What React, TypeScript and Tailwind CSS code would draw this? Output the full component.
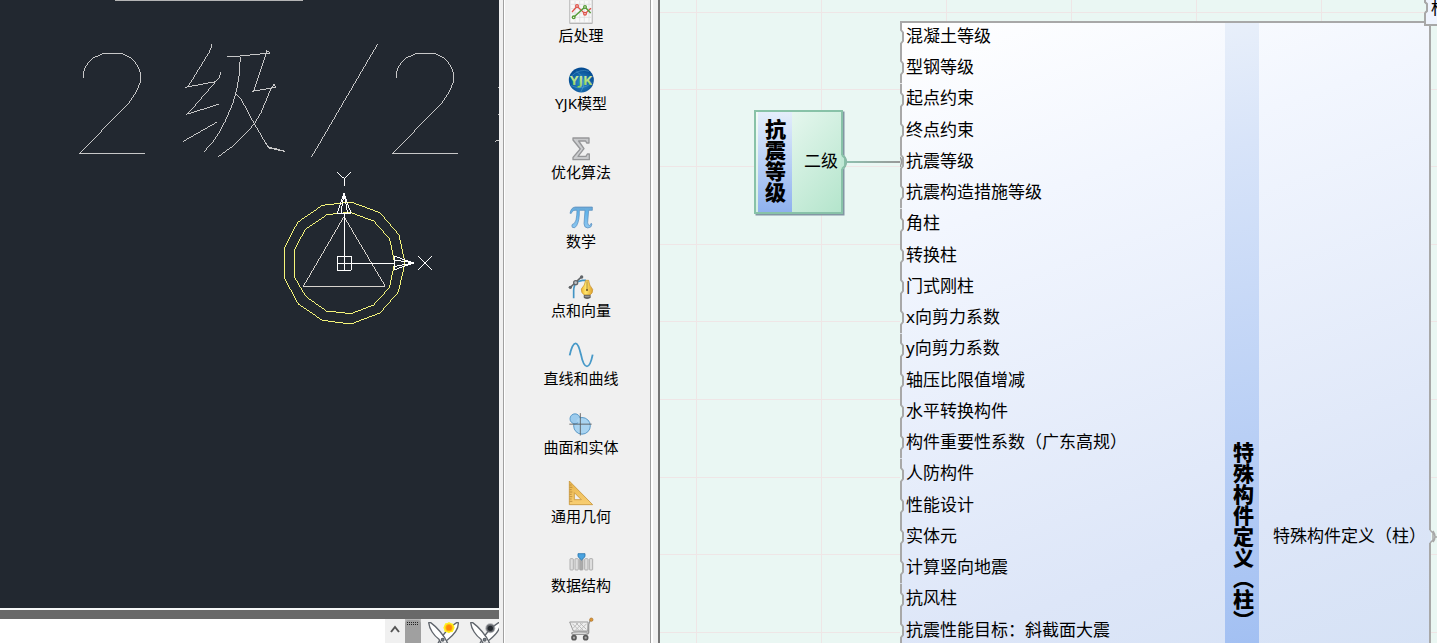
import React from "react";

const SANS = "font-['Noto_Sans','Noto_Sans_CJK_SC',sans-serif]";

const inputs = [
  "混凝土等级", "型钢等级", "起点约束", "终点约束", "抗震等级", "抗震构造措施等级", "角柱", "转换柱",
  "门式刚柱", "x向剪力系数", "y向剪力系数", "轴压比限值增减", "水平转换构件", "构件重要性系数（广东高规）",
  "人防构件", "性能设计", "实体元", "计算竖向地震", "抗风柱", "抗震性能目标：斜截面大震",
];

const TWO = "M70 143V128L76 112L84 99L100 84L130 70H185L213 84L232 105L241 128V158L225 192L205 222L58 370H254";

function CadDrawing() {
  return (
    <svg width="499" height="608" viewBox="0 0 499 608" fill="none" className="block">
      <path d="M115 0.5H303" stroke="#b5b5b5" />
      <g transform="translate(60 30) scale(.33333)" stroke="#c8c8c8" strokeWidth="3" shapeRendering="crispEdges">
        <path d={TWO} />
        <path d={TWO} transform="translate(939 0)" />
        <path d="M454 42V53L447 68L384 170M376 172L467 155M482 126L478 144L467 155L384 251M379 253L476 223M370 334L470 277" />
        <path d="M502 81L541 78L629 69L619 60V70L581 184M577 184L647 172L642 163L632 178L604 246L583 282L550 317L515 351L490 369L475 380" />
        <path d="M541 80L538 132L530 180L518 222L495 275L475 312L457 338L440 356L433 365M524 188L542 205L583 282L626 354L674 364L648 356L626 352L617 339M626 357H648" />
        <path d="M754 382L953 42M1314 172H1317M1314 253H1317M1305 334L1317 330" />
      </g>
      <g transform="translate(270 160) scale(.33333)" strokeWidth="3" shapeRendering="crispEdges">
        <path stroke="#f4f47a" d="M43 264L83 187L157 136L243 126L330 158L387 225L405 309L385 396L330 459L243 492L157 481L85 432L43 354ZM73 270L106 208L171 164L240 157L311 183L359 237L374 309L358 383L311 435L243 461L169 453L107 409L73 350Z" />
        <path stroke="#d8d4ce" d="M222 170L346 379H100Z" />
        <path stroke="#fff" d="M223 160V331M202 310H374M202 289H244V331H202ZM202 37L223 56L243 37M223 56V77M444 289L486 329M486 289L444 329" />
        <path stroke="#fff" d="M222 99L202 160H243ZM222 99L213 160M222 99L233 160M432 309L374 289V329ZM432 309L374 300M432 309L374 319" />
      </g>
    </svg>
  );
}

function Snip({ dark = false }: { dark?: boolean }) {
  return (
    <svg width="36" height="24" viewBox="170 87 108 72" fill="none" className="block shrink-0">
      <g stroke="#5f646b" strokeWidth="4" fill="#fff" strokeLinejoin="round">
        <path d="M264 98C265 116 252 134 231 150L216 160H203C214 136 238 110 259 98Z" />
        <path d="M175 98C177 117 191 137 206 148L212 160H232C222 136 198 110 181 98Z" />
        <circle cx="217" cy="149" r="4" fill="#7c858e" />
      </g>
      {dark ? (
        <g><circle cx="234" cy="115" r="15" fill="#85888d" opacity=".6" /><circle cx="234" cy="115" r="12" fill="#63666c" /><circle cx="234" cy="115" r="8" fill="#24282e" /></g>
      ) : (
        <g><path d="M236 96L241 99L248 101L251 108L253 113L250 120L247 126L240 127L236 130L230 127L223 125L221 118L219 113L222 106L225 100L231 99Z" fill="#fff01c" /><circle cx="236" cy="113" r="11" fill="#ffb210" /><circle cx="236" cy="113" r="8" fill="#ff8908" /></g>
      )}
    </svg>
  );
}

function Defs() {
  return (
    <svg width="0" height="0" className="absolute">
      <defs>
        <linearGradient id="blue" x1="0" y1="0" x2="0" y2="1"><stop stopColor="#6fa9d5" /><stop offset=".25" stopColor="#63b5eb" /><stop offset="1" stopColor="#8dc6ef" /></linearGradient>
        <linearGradient id="gold" x1="0" y1="0" x2="0" y2="1"><stop stopColor="#e9b54c" /><stop offset="1" stopColor="#f8ce72" /></linearGradient>
        <linearGradient id="nib" x1="0" y1="0" x2="1" y2="0"><stop stopColor="#f0b62e" /><stop offset=".4" stopColor="#ffe66d" /><stop offset="1" stopColor="#dda02c" /></linearGradient>
        <radialGradient id="globe" cx=".5" cy=".6" r=".55"><stop stopColor="#2f8fca" /><stop offset="1" stopColor="#044b92" /></radialGradient>
        <linearGradient id="yjk" x1="0" y1="0" x2="0" y2="1"><stop stopColor="#def4b2" /><stop offset="1" stopColor="#86cc4b" /></linearGradient>
      </defs>
    </svg>
  );
}

const tools: { label: string; box: string; art: React.ReactNode }[] = [
  {
    label: "后处理", box: "204 -4 78 78",
    art: <g fill="none">
      <rect x="208" y="-2" width="70" height="73" rx="3" fill="#aaa" /><rect x="209.500" y="-2" width="67" height="70" rx="2" fill="#f8f8f8" stroke="#c2c2c2" strokeWidth="3" />
      <path d="M213 12H273M213 25H273M213 38H273M213 51H273M225 2V64M239 2V64M253 2V64M267 2V64" stroke="#dadada" strokeWidth="2" />
      <g strokeWidth="4"><path d="M216 35L231 18L255 40L273 24" stroke="#df5148" /><path d="M221 51L255 20L272 38" stroke="#559b35" />
        <circle cx="231" cy="17" r="4" stroke="#df5148" fill="#fff" /><circle cx="255" cy="40" r="4" stroke="#df5148" fill="#fff" /><circle cx="221" cy="51" r="4" stroke="#559b35" fill="#fff" /><circle cx="255" cy="20" r="4" stroke="#559b35" fill="#fff" /></g>
    </g>,
  },
  {
    label: "YJK模型", box: "204 202 78 78",
    art: <g>
      <circle cx="244" cy="241" r="37.500" fill="url(#globe)" />
      <path d="M213 230Q240 205 267 215M213 258Q246 274 277 249M229 214Q267 241 242 278" fill="none" stroke="#69b5dc" strokeWidth="2" opacity=".6" />
      <text x="243" y="256" textAnchor="middle" fontSize="37" fontWeight="700" fill="url(#yjk)" textLength="68" lengthAdjust="spacingAndGlyphs" className="font-['Open_Sans',sans-serif]">YJK</text>
    </g>,
  },
  {
    label: "优化算法", box: "204 409 78 78",
    art: <g strokeLinejoin="round"><path d="M219 415H267V430H260L257 424H236L252 447L234 470H258L262 463H268V480H219V473L241 448L219 421Z" fill="#c8c9cb" stroke="#969799" strokeWidth="4" /><path d="M224 419L246 447L224 476" fill="none" stroke="#d0d1d3" strokeWidth="3" /></g>,
  },
  {
    label: "数学", box: "204 15 78 78",
    art: <path d="M210 40Q213 22 226 21H277V31H266L263 67Q263 76 269 76Q272 75 273 70L276 72Q275 84 263 84Q252 83 252 71L255 31H238Q239 61 230 77Q224 87 217 82Q214 78 217 73Q224 73 228 60Q231 45 231 31Q217 29 214 40Z" fill="url(#blue)" stroke="#5286b8" strokeWidth="2" />,
  },
  {
    label: "点和向量", box: "204 221 78 78",
    art: <g fill="none">
      <path d="M221 294V270Q222 250 232 244L247 240H258" stroke="#4294c4" strokeWidth="5" /><path d="M209 263L246 228" stroke="#62666a" strokeWidth="5" />
      <circle cx="227" cy="247" r="6" fill="#bfc3c7" stroke="#62666a" strokeWidth="4" /><circle cx="211" cy="261" r="5" fill="#606468" /><circle cx="245" cy="230" r="5" fill="#606468" />
      <path d="M257 240H266Q267 255 278 267Q279 279 270 284H253Q243 278 244 266Q255 255 257 240Z" fill="url(#nib)" stroke="#c58c28" strokeWidth="2" /><path d="M261 243V270" stroke="#92733a" strokeWidth="2" /><circle cx="261" cy="269" r="3" fill="#6e5125" /><path d="M252 285H271V292Q261 298 252 292Z" fill="#696969" stroke="#444" strokeWidth="1.500" /><path d="M254 288H269" stroke="#bbb" strokeWidth="2" />
    </g>,
  },
  {
    label: "直线和曲线", box: "204 427 78 78",
    art: <path d="M209 467Q217 431 227 431Q235 431 243 465Q250 500 261 500Q271 500 278 465" fill="none" stroke="#4799c8" strokeWidth="5.500" />,
  },
  {
    label: "曲面和实体", box: "204 33.5 78 78",
    art: <g fill="none"><circle cx="246" cy="78" r="25" fill="#a9d4f1" stroke="#5a9ac9" strokeWidth="3" /><circle cx="225" cy="57" r="15" fill="#9ccbed" stroke="#5a9ac9" strokeWidth="3" /><path d="M233 58L246 69" stroke="#a9d4f1" strokeWidth="14" /><path d="M208 73H275M241 40V107" stroke="#555" strokeWidth="2.500" /></g>,
  },
  {
    label: "通用几何", box: "204 240 78 78",
    art: <g><path d="M208 243L278 314H208ZM223 278V299H244Z" fill="url(#gold)" fillRule="evenodd" stroke="#c89539" strokeWidth="2.500" /><path d="M209 255H215M209 262H217M209 269H215M209 276H217M209 283H215M209 290H217M209 297H215M209 304H217" stroke="#a9772c" strokeWidth="2" /></g>,
  },
  {
    label: "数据结构", box: "204 446 78 78",
    art: <g fill="#dedede" stroke="#a3a3a3" strokeWidth="2.500">
      <rect x="210" y="475" width="10" height="34" rx="2" /><rect x="225" y="475" width="10" height="34" rx="2" /><rect x="239" y="473" width="10" height="36" rx="2" fill="#aaa" /><rect x="254" y="475" width="10" height="34" rx="2" /><rect x="268" y="475" width="10" height="34" rx="2" />
      <path d="M234 460H255V469L244.500 479L234 469Z" fill="#4aa3df" stroke="#2a76ae" />
    </g>,
  },
  {
    label: "", box: "204 652 78 78",
    art: <g fill="none"><path d="M209 667H264L263 694H220Z" fill="#eee" stroke="#9b9b9b" strokeWidth="3" /><path d="M217 672L237 692M228 670L250 692M240 670L259 689M234 670L219 686M248 670L226 692M260 672L240 692" stroke="#b5b5b5" strokeWidth="2.500" /><path d="M271 661L266 674V699Q265 704 256 704H219Q214 703 216 699Q217 696 263 697" stroke="#969696" strokeWidth="4" /><circle cx="274" cy="660" r="5" fill="#dd9735" stroke="#a56b24" strokeWidth="2" /><circle cx="222" cy="714" r="6" fill="#aaa" stroke="#5a5a5a" strokeWidth="5" /><circle cx="257" cy="714" r="6" fill="#aaa" stroke="#5a5a5a" strokeWidth="5" /></g>,
  },
];

function Viewer() {
  return (
    <section className="flex h-full w-[499px] shrink-0 flex-col overflow-hidden bg-[#222830]">
      <CadDrawing />
      <div className="h-[2px] shrink-0 bg-[#f6f8f8]" />
      <div className="h-[9px] shrink-0 bg-[#696969]" />
      <div className="flex h-6 shrink-0 bg-[#f0f0f0]">
        <div className="w-[385px] bg-white" />
        <div className="flex w-5 justify-center pt-[6px]">
          <svg width="10" height="8" viewBox="0 0 10 8"><path d="M1 7L5 2L9 7" fill="none" stroke="#555" strokeWidth="2" /></svg>
        </div>
        <div className="w-[16px] bg-[#a0a0a0]">
          <svg width="16" height="7" viewBox="0 0 16 7"><path d="M0 0H16V4Q15 1 13 1H3Q1 1 0 4Z" fill="#b9b9b9" /><path d="M2 3.500H14M2 5.500H14" stroke="#222" strokeDasharray="1 1" /></svg>
        </div>
        <div className="flex w-[78px] gap-[6px] overflow-hidden pl-[6px]"><Snip /><Snip dark /></div>
      </div>
    </section>
  );
}

function Toolbox() {
  return (
    <aside className="flex h-full w-[161px] shrink-0 overflow-hidden bg-[#f0f0f0]">
      <div className="ml-1 w-px bg-[#a0a0a0]" />
      <div className="w-px bg-white" />
      <div className="mt-[-1.3px] flex w-[145px] flex-col items-center pl-[7px]">
        {tools.map((t, i) => (
          <div key={i} className="flex h-[68.75px] w-full shrink-0 flex-col items-center">
            <svg width="26" height="26" viewBox={t.box} className="block shrink-0">{t.art}</svg>
            <span className="-mt-px whitespace-nowrap text-[15px] leading-[22px] text-black">{t.label}</span>
          </div>
        ))}
      </div>
      <div className="w-px bg-[#a0a0a0]" />
      <div className="w-[2px] bg-white" />
      <div className="w-[5px]" />
      <div className="w-[2px] bg-[#757575]" />
    </aside>
  );
}

function InputEdge({ wired = false }: { wired?: boolean }) {
  return (
    <svg width="6" height="31.25" viewBox="0 0 6 31.25" fill="none" className="block shrink-0">
      <path d="M0 9H1L3 11.500V20L1 22.500H0Z" fill="#eaf7f3" />
      <path d="M1 0V9L3 11.500V20L1 22.500V31.250" stroke="#a8a8a8" strokeWidth="2" />
      {wired && <path d="M0 11Q3 15 0 21" stroke="#999" strokeWidth="1.500" />}
    </svg>
  );
}

function Graph() {
  const columns = [36.5, 161.5, 286.5, 411.5, 536.5, 661.5];
  const rows = [12.5, 89.5, 166.5, 244.5, 321.5, 399.5, 477.5, 554.5, 632.5];
  return (
    <main className="relative h-full w-[777px] shrink-0 overflow-hidden bg-[#eaf7f3]">
      <svg width="777" height="643" className="absolute inset-0">
        <g stroke="#efe6e6">
          {columns.map((x) => <path key={x} d={`M${x} 0V643`} />)}
          {rows.map((y) => <path key={y} d={`M0 ${y}H777`} />)}
        </g>
      </svg>

      <div className="absolute left-[94px] top-[110px] flex h-[104px] w-[89px] border-2 border-[#88c2a8] bg-linear-to-br from-[#f2fbf7] to-[#b4e5cc] pl-[2px] shadow-[1.500px_1.500px_0_#8296a3]">
        <div className="flex w-[34px] items-center justify-center bg-linear-to-b from-[#e4eefb] to-[#8fb1ee] pb-[3px] pr-[2px]">
          <span className="whitespace-nowrap text-[21px] font-black leading-[21px] text-black [writing-mode:vertical-rl]">抗震等级</span>
        </div>
        <span className="flex flex-1 items-center justify-end pb-[2px] pr-[3px] text-[17px] text-black">二级</span>
      </div>

      <div className="absolute left-[240px] top-[21px] flex h-[1031px] w-[531px] border-r-2 border-t-2 border-[#a8a8a8] bg-[linear-gradient(160deg,#ffffff_0%,#f2f6fe_18%,#dde6f8_52%,#c6d9f0_100%)]">
        <ul className="-mt-[2px] w-[325px] shrink-0">
          {inputs.map((label) => (
            <li key={label} className="flex h-[31.25px] items-center">
              <InputEdge wired={label === "抗震等级"} />
              <span className="-mt-[1.5px] whitespace-nowrap text-[17px] leading-[24px] text-black">{label}</span>
            </li>
          ))}
        </ul>
        <div className="flex w-[34px] shrink-0 items-center justify-center bg-[linear-gradient(170deg,#e8effa_0%,#d8e4f9_12%,#a1bff2_62%,#83a8eb_100%)] pb-[3px]">
          <span className="whitespace-nowrap text-[21px] font-black leading-[21px] text-black [writing-mode:vertical-rl]">特殊构件定义（柱）</span>
        </div>
        <span className="flex flex-1 items-center whitespace-nowrap pb-[3px] pl-[14px] text-[17px] text-black">特殊构件定义（柱）</span>
      </div>

      <div className="absolute left-[764px] top-[-6px] h-[32px] w-[60px] border-2 border-[#a8a8a8] bg-[#eff4fe] pl-[5px] text-[17px] leading-[24px] text-black">标</div>

      <svg width="777" height="643" className="pointer-events-none absolute inset-0" fill="none">
        <defs><linearGradient id="wire" x1="0" x2="1"><stop stopColor="#8fbfae" /><stop offset="1" stopColor="#999" /></linearGradient></defs>
        <path d="M181 155V169H184V155Z" fill="#c0e8d5" />
        <path d="M182 155L185 158V166L182 169" stroke="#88c2a8" strokeWidth="2" />
        <path d="M184 156Q189 162 184 168" stroke="#8bb8a7" strokeWidth="1.500" />
        <rect x="187" y="161" width="53" height="2" fill="url(#wire)" />
        <path d="M764 0V2L767 5V10L764 13V0Z" fill="#eaf7f3" />
        <path d="M765 0V2L767 4V11L765 13" stroke="#a8a8a8" strokeWidth="2" />
        <path d="M768 530H771V543H768Z" fill="#dae5f7" />
        <path d="M770 530L773 533V540L770 543M773 531Q777 537 773 542M775 537H777" stroke="#a8a8a8" strokeWidth="1.500" />
      </svg>
    </main>
  );
}

export default function App() {
  return (
    <div className={`flex h-[643px] w-[1437px] overflow-hidden ${SANS}`}>
      <Defs />
      <Viewer />
      <Toolbox />
      <Graph />
    </div>
  );
}
